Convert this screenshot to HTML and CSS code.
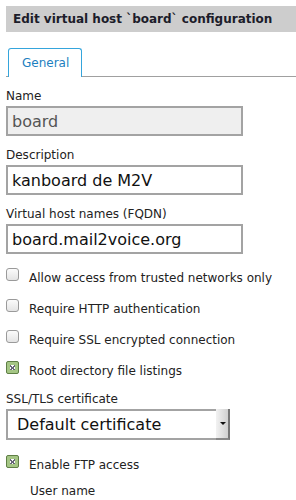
FILE: index.html
```html
<!DOCTYPE html>
<html lang="en">
<head>
  <meta charset="UTF-8">
  <title>Edit virtual host</title>
  <link rel="stylesheet" href="styles.css">
</head>
<body>

<h1 class="title">Edit virtual host `board` configuration</h1>

<div class="tabs">
  <span class="tab">General</span>
</div>

<div class="field">
  <label>Name</label>
  <input class="text disabled" type="text" value="board" readonly>
</div>
<div class="field">
  <label>Description</label>
  <input class="text" type="text" value="kanboard de M2V">
</div>
<div class="field">
  <label>Virtual host names (FQDN)</label>
  <input class="text" type="text" value="board.mail2voice.org">
</div>

<div class="checks">
  <div class="check"><span class="box"></span><span>Allow access from trusted networks only</span></div>
  <div class="check"><span class="box"></span><span>Require HTTP authentication</span></div>
  <div class="check"><span class="box"></span><span>Require SSL encrypted connection</span></div>
  <div class="check"><span class="box on"></span><span>Root directory file listings</span></div>
</div>

<div class="field ssl">
  <label>SSL/TLS certificate</label>
  <div class="select">
    <span class="select-text">Default certificate</span>
    <span class="select-btn"></span>
  </div>
</div>

<div class="check ftp"><span class="box on"></span><span>Enable FTP access</span></div>
<div class="sub">User name</div>

</body>
</html>
```

FILE: styles.css
```css
body {
  margin: 0;
  padding: 6px 0 0 6px;
  background: #fff;
  color: #222;
  font-family: "DejaVu Sans", Verdana, sans-serif;
  font-size: 12px;
  line-height: 16px;
}
.title {
  margin: 0;
  height: 26px;
  line-height: 26px;
  padding: 0 7px;
  background: #cdcdcd;
  color: #1c1c2a;
  font-size: 12px;
  font-weight: bold;
}
.tabs {
  display: flex;
  margin-top: 16px;
  padding-left: 2px;
  border-bottom: 1px solid #a0a0a0;
}
.tab {
  height: 28px;
  line-height: 28px;
  padding: 0 12px 0 13px;
  margin-bottom: -1px;
  background: #fff;
  color: #1c80c0;
  border: 1px solid #35a5dc;
  border-bottom: none;
  border-radius: 3px 3px 0 0;
}
.field {
  margin-top: 11px;
}
.field label {
  display: block;
  margin-bottom: 2px;
}
.text {
  display: block;
  box-sizing: border-box;
  width: 237px;
  height: 30px;
  margin: 0;
  padding: 0 4px;
  border: 2px solid #a3a3a3;
  border-radius: 0;
  background: #fff;
  color: #111;
  font-family: "DejaVu Sans", Verdana, sans-serif;
  font-size: 16px;
  outline: none;
}
.text.disabled {
  background: #efefef;
  color: #555;
}
.checks {
  margin-top: 14px;
}
.check {
  display: flex;
  gap: 10px;
  height: 18px;
  margin-bottom: 13px;
}
.check span:last-child {
  margin-top: 2px;
}
.box {
  box-sizing: border-box;
  width: 13px;
  height: 13px;
  border: 1px solid #9a9a9a;
  border-radius: 3px;
  background: linear-gradient(#fbfbfb, #e4e4e4);
}
.box.on {
  position: relative;
  border-color: #5f7f45;
  border-radius: 2px;
  background: #a5c685;
}
.box.on::after {
  content: "";
  position: absolute;
  left: 3px;
  top: 3px;
  width: 5px;
  height: 5px;
  background:
    linear-gradient(45deg, transparent 40%, #667 40%, #667 60%, transparent 60%),
    linear-gradient(-45deg, transparent 40%, #667 40%, #667 60%, transparent 60%),
    #fff;
}
.ssl {
  margin-top: -1px;
}
.select {
  box-sizing: border-box;
  display: flex;
  width: 224px;
  height: 31px;
  border: 2px solid #a3a3a3;
  border-right: none;
  background: #fff;
}
.select-text {
  flex: 1;
  padding-left: 9px;
  font-size: 16px;
  line-height: 27px;
  color: #111;
}
.select-btn {
  position: relative;
  width: 14px;
  margin-top: -2px;
  margin-bottom: -2px;
  background: linear-gradient(90deg, #f2f2f2, #d0d0d0);
  border-right: 2px solid #777;
  border-bottom: 2px solid #888;
  box-sizing: border-box;
}
.select-btn::after {
  content: "";
  position: absolute;
  left: 4px;
  top: 13px;
  border-left: 3px solid transparent;
  border-right: 3px solid transparent;
  border-top: 3px solid #111;
}
.ftp {
  margin-top: 15px;
  margin-bottom: 10px;
}
.sub {
  padding-left: 24px;
}
```
